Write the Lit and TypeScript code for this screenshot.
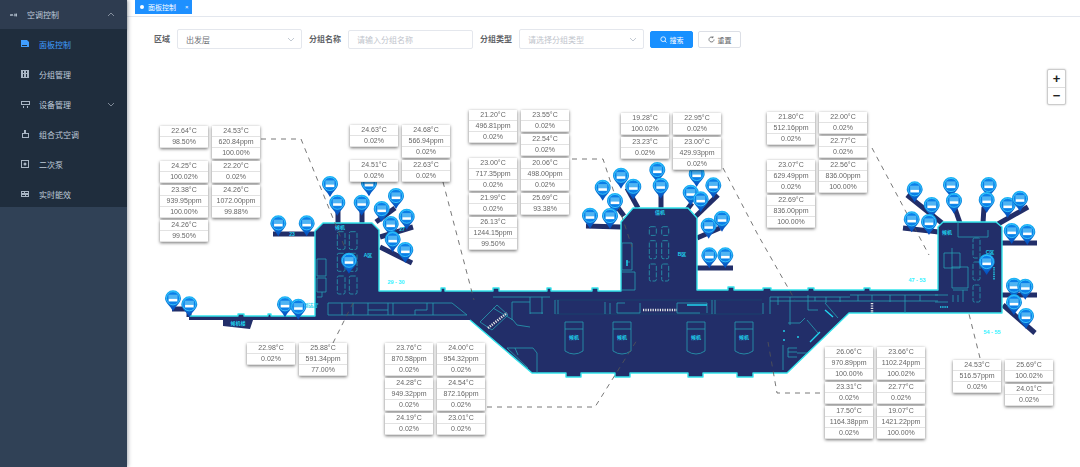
import { LitElement, html, css, svg } from "lit";
import { customElement } from "lit/decorators.js";

// canvas origin in page coordinates, everything on the map is given in page px
const OX = 127;
const OY = 60;

type Cell = string[][];
interface Cluster {
  x: number;
  y: number;
  cells: Cell[];
}

const c = (...v: string[]) => v;

const CLUSTERS: Cluster[] = [
  {
    x: 160,
    y: 126,
    cells: [
      [c("22.64°C", "98.50%")],
      [c("24.53°C", "620.84ppm", "100.00%")],
      [c("24.25°C", "100.02%")],
      [c("22.20°C", "0.02%")],
      [c("23.38°C", "939.95ppm", "100.00%")],
      [c("24.26°C", "1072.00ppm", "99.88%")],
      [c("24.26°C", "99.50%")],
    ],
  },
  {
    x: 350,
    y: 125,
    cells: [
      [c("24.63°C", "0.02%")],
      [c("24.68°C", "566.94ppm", "0.02%")],
      [c("24.51°C", "0.02%")],
      [c("22.63°C", "0.02%")],
    ],
  },
  {
    x: 469,
    y: 110,
    cells: [
      [c("21.20°C", "496.81ppm", "0.02%")],
      [c("23.55°C", "0.02%"), c("22.54°C", "0.02%")],
      [c("23.00°C", "717.35ppm", "0.02%")],
      [c("20.06°C", "498.00ppm", "0.02%")],
      [c("21.99°C", "0.02%")],
      [c("25.69°C", "93.38%")],
      [c("26.13°C", "1244.15ppm", "99.50%")],
    ],
  },
  {
    x: 621,
    y: 113,
    cells: [
      [c("19.28°C", "100.02%")],
      [c("22.95°C", "0.02%")],
      [c("23.23°C", "0.02%")],
      [c("23.00°C", "429.93ppm", "0.02%")],
    ],
  },
  {
    x: 767,
    y: 112,
    cells: [
      [c("21.80°C", "512.16ppm", "0.02%")],
      [c("22.00°C", "0.02%"), c("22.77°C", "0.02%")],
      [c("23.07°C", "629.49ppm", "0.02%")],
      [c("22.56°C", "836.00ppm", "100.00%")],
      [c("22.69°C", "836.00ppm", "100.00%")],
    ],
  },
  {
    x: 247,
    y: 343,
    cells: [[c("22.98°C", "0.02%")], [c("25.88°C", "591.34ppm", "77.00%")]],
  },
  {
    x: 385,
    y: 343,
    cells: [
      [c("23.76°C", "870.58ppm", "0.02%")],
      [c("24.00°C", "954.32ppm", "0.02%")],
      [c("24.28°C", "949.32ppm", "0.02%")],
      [c("24.54°C", "872.16ppm", "0.02%")],
      [c("24.19°C", "0.02%")],
      [c("23.01°C", "0.02%")],
    ],
  },
  {
    x: 825,
    y: 347,
    cells: [
      [c("26.06°C", "970.89ppm", "100.00%")],
      [c("23.66°C", "1102.24ppm", "100.02%")],
      [c("23.31°C", "0.02%")],
      [c("22.77°C", "0.02%")],
      [c("17.50°C", "1164.38ppm", "0.02%")],
      [c("19.07°C", "1421.22ppm", "100.00%")],
    ],
  },
  {
    x: 953,
    y: 360,
    cells: [
      [c("24.53°C", "516.57ppm", "0.02%")],
      [c("25.69°C", "100.02%"), c("24.01°C", "0.02%")],
    ],
  },
];

// circle centres of the pins
const PINS: number[][] = [
  [330, 184], [369, 183.3], [337.3, 202.7], [361.7, 202.7], [396, 196], [381.7, 209],
  [406.7, 216.7], [390.7, 224], [392.7, 239.3], [405.3, 250], [349, 260.7], [278.3, 223.3],
  [306.7, 223.3], [173, 298.3], [189.3, 304.3], [285, 304.3], [298.3, 306.7],
  [621, 175.7], [657.3, 170], [602.7, 187.7], [633.3, 186.7], [660.7, 185.7], [696.7, 174],
  [690.7, 192.7], [713.3, 185.3], [700.7, 199.3], [615, 201], [590, 215.7], [610, 216],
  [708.7, 225.7], [722, 218.7], [709.3, 255.3], [725.3, 255.3],
  [914.7, 189.3], [931.7, 205], [951, 185], [954, 200.7], [988.7, 185], [986.7, 200],
  [1007.7, 205], [1020, 198.7], [911.7, 219.3], [929, 222], [1011.7, 231], [1027.3, 232],
  [986.7, 262], [1014, 285.7], [1025.3, 286.7], [1014, 302.3], [1026, 316],
];

const BRIDGES: string[] = [
  "273,234 316,234", "172,309 189,309 189,317",
  "338,224 338,205", "362,224 362,205", "376,222 395,208", "380,237 413,227", "380,247 412,263",
  "586,226 621,227", "610,197 624,216", "627,188 638,208", "661,190 661,208", "686,211 692,203",
  "695,217 718,195", "697,238 720,228", "697,268 733,268",
  "907,195 942,223", "953,203 960,223", "984,207 983,223", "1028,207 998,224", "903,228 939,232",
  "1002,243 1037,243", "1002,295 1037,295", "1003,305 1035,333",
];

const GATES: number[][] = [
  [337.3, 231.7, 7.7, 17.7], [349.3, 231.7, 7.7, 17.7], [337.3, 253.3, 7.7, 18], [349.3, 253.3, 7.7, 18],
  [337.3, 276, 7.7, 18], [349.3, 276, 7.7, 18],
  [649.3, 226.7, 7, 8.7], [661.7, 226.7, 7, 8.7], [649.3, 240.7, 7, 18], [661.7, 240.7, 7, 18],
  [649.3, 264, 7, 17], [661.7, 264, 7, 17],
  [973, 238, 7, 20], [973, 262, 7, 18], [973, 285, 7, 17],
];

const DASHES: string[] = [
  "261,139 301,139 345,248",
  "443,182 474,300",
  "572,159 603,159 632,247",
  "723,168 758,235 795,300",
  "872,148 929,255",
  "333,343 353,303",
  "487,407 595,407 637,340",
  "820,393 777,393 768,342",
  "980,358 968,310",
];

const INNER: string[] = [
  // west concourse rooms
  "M328 303H452L467 315M328 315H467M328 303V315M342 303V315M353 303V315M368 303V315M368 310H388M388 303V315M393 303V315M415 310H427V303M415 310V315M433 303V315",
  // hub A side rooms
  "M317 259H326V276H317ZM317 278H326V292H317ZM322 292V297H317",
  // hub B side rooms
  "M622 243H632V270H622ZM622 272H635V290H622M626 262H630",
  // central row
  "M493 297H550M512 302V320M530 297V314M542 297V314M512 302H530M530 313H543M493 308L513 320L517 325L530 327",
  "M555 300V314M558 300V314M605 302V314M610 303V314M617 303V313H640V303M617 303H625M677 303V313H700M677 303H707V313M712 300V314M715 300V314",
  "M480 322L497 305L508 315L492 330ZM507 348H533L537 353V373M515 348L518 355M507 348L528 368",
  // east concourse
  "M763 303V314M770 297V314M770 297H850M770 301H850M778 297V305M790 297V325M788 323H800L805 318M808 295V310H818M815 297V301M826 297V303M840 297V302",
  "M850 295H938M850 301H938M858 295V301M872 295V301M890 295V302M905 295V313M920 295V301",
  "M825 303L838 318M807 320L818 333M783 345V370M788 348H797M788 348V357H797M788 352H797M797 353H815",
  // hub C rooms
  "M958 222V237H988V230M944 253H960V268H944ZM952 248V268M952 267H968V288H952ZM953 290H968M953 295V302M958 295V302M963 290V302M935 295H948M935 302H948",
];

@customElement("app-root")
export class AppRoot extends LitElement {
  static styles = css`
    :host {
      display: block;
      height: 467px;
      overflow: hidden;
      font-family: "Liberation Sans", "Noto Sans CJK SC", sans-serif;
      background: #fff;
    }
    .app {
      display: flex;
      height: 100%;
    }
    .side {
      width: 127px;
      flex: none;
      background: #304156;
      box-shadow: 1px 0 4px rgba(0, 21, 41, 0.35);
      z-index: 2;
      color: #bfcbd9;
      font-size: 8px;
    }
    .head {
      height: 29px;
      display: flex;
      align-items: center;
      padding: 0 12px 0 10px;
      background: #2e3c50;
      box-shadow: 0 1px 2px rgba(0, 0, 0, 0.2);
      gap: 9px;
    }
    .head span,
    .item span {
      flex: 1;
    }
    .sub {
      background: #1f2d3d;
      height: 178px;
    }
    .item {
      height: 30px;
      display: flex;
      align-items: center;
      padding: 0 12px 0 21px;
      gap: 9px;
    }
    .item.on {
      color: #409eff;
    }
    .main {
      flex: 1;
      display: flex;
      flex-direction: column;
      min-width: 0;
    }
    .tabs {
      height: 16px;
      flex: none;
      border-bottom: 1px solid #e3e7ee;
      padding-left: 8px;
      display: flex;
    }
    .tab {
      width: 57px;
      height: 14px;
      box-sizing: border-box;
      background: #1e90ff;
      color: #fff;
      font-size: 7px;
      display: flex;
      align-items: center;
      padding-left: 5px;
      gap: 4px;
    }
    .tab i {
      width: 4px;
      height: 4px;
      border-radius: 50%;
      background: #fff;
    }
    .tab b {
      font-weight: 400;
      margin-left: 5px;
      font-size: 6px;
    }
    .form {
      flex: none;
      height: 43px;
      box-sizing: border-box;
      padding: 12px 0 0 27px;
      display: flex;
      align-items: flex-start;
      font-size: 8px;
      color: #606266;
    }
    .form label {
      font-weight: 700;
      height: 20px;
      line-height: 21px;
      margin-right: 7px;
      white-space: nowrap;
    }
    .ctl {
      width: 125px;
      height: 20px;
      box-sizing: border-box;
      border: 1px solid #e4e7ed;
      border-radius: 2px;
      padding: 0 6px 0 8px;
      margin-right: 7px;
      display: flex;
      align-items: center;
      justify-content: space-between;
      color: #6d7076;
      background: #fff;
    }
    .ctl.ph {
      color: #c0c4cc;
    }
    .ctl.inp {
      height: 19px;
      margin-top: 1px;
    }
    .btn {
      width: 43px;
      height: 17px;
      margin: 2px 5px 0 -1px;
      box-sizing: border-box;
      border: 1px solid #1890ff;
      border-radius: 2px;
      background: #1890ff;
      color: #fff;
      font-size: 7px;
      display: flex;
      align-items: center;
      justify-content: center;
      gap: 3px;
    }
    .btn.plain {
      background: #fff;
      border-color: #dcdfe6;
      color: #606266;
      margin-left: 0;
    }
    .canvas {
      flex: 1;
      position: relative;
      overflow: hidden;
    }
    .map {
      position: absolute;
      left: 0;
      top: 0;
      width: 953px;
      height: 407px;
    }
    .cluster {
      position: absolute;
      display: grid;
      grid-template-columns: 48px 48px;
      column-gap: 4px;
      row-gap: 2px;
      align-items: start;
      will-change: opacity;
    }
    .stack {
      display: flex;
      flex-direction: column;
      gap: 2px;
    }
    .card {
      background: #dfdfdf;
      box-shadow: 0 1px 3px rgba(0, 0, 0, 0.55);
    }
    .card div {
      height: 11px;
      box-sizing: border-box;
      line-height: 10px;
      background: #fff;
      border-bottom: 1px solid #e2e2e2;
      text-align: center;
      font-size: 7px;
      color: #666;
      white-space: nowrap;
    }
    .zoom {
      position: absolute;
      top: 9px;
      right: 14px;
      width: 19px;
      height: 36px;
      box-sizing: border-box;
      background: #fff;
      border: 1px solid #ccc;
      border-radius: 2px;
      box-shadow: 0 0 2px rgba(0, 0, 0, 0.25);
      display: flex;
      flex-direction: column;
    }
    .zoom div {
      flex: 1;
      display: flex;
      align-items: center;
      justify-content: center;
      font: 700 13px "Liberation Sans", sans-serif;
      color: #222;
    }
    .zoom div + div {
      border-top: 1px solid #ddd;
    }
  `;

  chevron(up = false) {
    return html`<svg width="8" height="5" viewBox="0 0 8 5" fill="none" stroke="#a8b2bf" stroke-width=".7">
      <path d=${up ? "M1 4L4 1l3 3" : "M1 1l3 3 3-3"} />
    </svg>`;
  }

  icon(d: string, color = "#a9b6c5") {
    return html`<svg width="9" height="9" viewBox="0 0 9 9" style="flex:none">
      <path d=${d} fill=${color} fill-rule="evenodd" />
    </svg>`;
  }

  renderSide() {
    return html`<aside class="side">
      <div class="head">
        <svg width="8" height="8" viewBox="0 0 8 8" style="flex:none" fill="none" stroke="#bfcbd9" stroke-width=".8">
          <path d="M0 3l1 2 1-2 1 2M4 4h3M5 2.5v3M6.5 2.5v3" />
        </svg>
        <span>空调控制</span>${this.chevron(true)}
      </div>
      <div class="sub">
        <div class="item on">
          ${this.icon("M0 0h6l2 2v5H0zM1 5v1h5V5z", "#409eff")}<span>面板控制</span>
        </div>
        <div class="item">
          ${this.icon("M0 0h8v8H0zM2 1v2h1V1zM5 1v2h1V1zM2 4v3h1V4zM5 4v3h1V4z")}<span>分组管理</span>
        </div>
        <div class="item">
          ${this.icon("M0 1h9v4H0zM1 2v2h7V2zM2 6h1v2H2zM6 6h1v2H6z")}<span>设备管理</span>${this.chevron()}
        </div>
        <div class="item">
          ${this.icon("M3 0h2v3h3v5H1V3h2zM2 4v3h5V4z")}<span>组合式空调</span>
        </div>
        <div class="item">
          ${this.icon("M0 0h8v8H0zM1 1v6h6V1zM4 2.5a1.5 1.5 0 1 1 0 3 1.5 1.5 0 0 1 0-3z")}<span>二次泵</span>
        </div>
        <div class="item">
          ${this.icon("M0 1h8v6H0zM1 2v1h2V2zM4 2v1h3V2zM1 5v1h3V5zM5 5v1h2V5z")}<span>实时能效</span>
        </div>
      </div>
    </aside>`;
  }

  renderForm() {
    return html`<div class="form">
      <label>区域</label>
      <div class="ctl"><span>出发层</span>${this.chevron()}</div>
      <label>分组名称</label>
      <div class="ctl ph inp"><span>请输入分组名称</span></div>
      <label>分组类型</label>
      <div class="ctl ph"><span>请选择分组类型</span>${this.chevron()}</div>
      <div class="btn">
        <svg width="7" height="7" viewBox="0 0 7 7" fill="none" stroke="#fff" stroke-width=".8">
          <circle cx="3.2" cy="3.2" r="2.4" /><path d="M5 5l1.5 1.5" />
        </svg>
        搜索
      </div>
      <div class="btn plain">
        <svg width="7" height="7" viewBox="0 0 7 7" fill="none" stroke="#606266" stroke-width=".8">
          <path d="M6 3.5A2.5 2.5 0 1 1 5 1.5M5 .3v1.4H3.6" />
        </svg>
        重置
      </div>
    </div>`;
  }

  renderMap() {
    // open outline: the west strip has no cyan edge on its underside
    const edge =
      "M189 316H238V314H244V316H268V314H271V316H315V231L323 223H372L379 230V291H441V288H445V291H493V288H499V291H547V288H551V291H592V288H598V291H621V222L633 208H688L697 218V290H728V287H734V290H763V288H771V290H808V288H814V290H864V288H870V290H938V227L943 222H996L1002 227V313H849L787 373H753V377H737V373H703V377H688V373H630V377H615V373H581V377H566V373H532L470 320";
    const plan = `${edge}H189Z`;
    return svg`<svg class="map" viewBox="${OX} ${OY} 953 407">
      <defs>
        <linearGradient id="pg" x1="0" y1="0" x2="0" y2="1">
          <stop offset="0" stop-color="#18b4f8" /><stop offset="1" stop-color="#0348bc" />
        </linearGradient>
        <g id="pin">
          <path d="M-8 0A8 8 0 1 1 8 0C8 4.5 3 7 0 13C-3 7 -8 4.5 -8 0Z" fill="url(#pg)" />
          <circle r="6.6" fill="#0b7fe8" stroke="#3ac6fc" stroke-width=".9" />
          <rect x="-4.6" y="-3.6" width="9.2" height="7" fill="#4fb4f3" />
          <rect x="-4.2" y="0.6" width="8.4" height="2.4" fill="#fff" />
        </g>
        <clipPath id="inside"><path d=${plan} /></clipPath>
      </defs>
      <g fill="none" stroke="#222e69" stroke-width="5">
        ${BRIDGES.map((p) => svg`<polyline points=${p} />`)}
      </g>
      <path d="M223 318L253 320L250 329L223 326Z" fill="#222e69" />
      <path d=${plan} fill="#222e69" />
      <path d=${edge} fill="none" stroke="#33e4ec" stroke-width="1.4" stroke-linejoin="round" />
      <g clip-path="url(#inside)">
        <path d="M555 300H762M555 314H762" fill="none" stroke="#17466e" stroke-width=".8" />
        <g fill="none" stroke="#279fb2" stroke-width=".8">
          ${INNER.map((d) => svg`<path d=${d} />`)}
          ${GATES.map(
            ([x, y, w, h]) => svg`<rect x=${x} y=${y} width=${w} height=${h} rx="1.5" stroke-dasharray="5 1.5" />`
          )}
          ${[565, 613, 687, 735].map(
            (x) => svg`<path d="M${x} 322H${x + 18}M${x} 322V351Q${x + 9} 357 ${x + 18} 351V322M${x} 329H${x + 18}" />`
          )}
        </g>
      </g>
      <g fill="none" stroke="#e8e8e8" stroke-width="2.5" stroke-dasharray="1.2 1.2">
        <path d="M643 310H677" />
        <path d="M488 328L507 313" />
        <path d="M872 303V313" />
      </g>
      <g fill="none" stroke="#20d6f0" stroke-width="1.4">
        <path d="M687 305H707M810 342L820 332M825 310L833 317" />
        <path d="M940 307H948M994 267V280" stroke-dasharray="1.4 .8" />
        <path d="M784 330V332M784 339V341M798 336V338M627 260V266" />
      </g>
      <g fill="#1fd2ee" font-size="5" font-weight="700" text-anchor="middle">
        ${[
          ["候机", 340, 229], ["A区", 368, 257], ["23", 292, 236], ["B区", 682, 256],
          ["值机", 660, 214], ["C区", 990, 254], ["候机", 947, 234], ["到达厅", 311, 307],
          ["候机楼", 238, 325], ["27", 402, 231], ["候机", 574, 339], ["候机", 622, 339],
          ["候机", 696, 339], ["候机", 744, 339],
        ].map(([t, x, y]) => svg`<text x=${x} y=${y}>${t}</text>`)}
      </g>
      <g fill="#2ff2ff" font-size="5.5" font-weight="700" text-anchor="middle">
        <text x="396" y="284">29 - 30</text>
        <text x="917" y="282">47 - 53</text>
        <text x="992" y="334">54 - 55</text>
      </g>
      <g fill="none" stroke="#555" stroke-width=".8" stroke-dasharray="5 5">
        ${DASHES.map((p) => svg`<polyline points=${p} />`)}
      </g>
      ${PINS.map(([x, y]) => svg`<use href="#pin" x=${x} y=${y} />`)}
    </svg>`;
  }

  render() {
    return html`<div class="app">
      ${this.renderSide()}
      <main class="main">
        <div class="tabs">
          <div class="tab"><i></i>面板控制<b>×</b></div>
        </div>
        ${this.renderForm()}
        <div class="canvas">
          ${this.renderMap()}
          ${CLUSTERS.map(
            (g) => html`<div class="cluster" style="left:${g.x - OX}px;top:${g.y - OY}px">
              ${g.cells.map(
                (stack) => html`<div class="stack">
                  ${stack.map(
                    (rows) => html`<div class="card">${rows.map((r) => html`<div>${r}</div>`)}</div>`
                  )}
                </div>`
              )}
            </div>`
          )}
          <div class="zoom"><div>+</div><div>−</div></div>
        </div>
      </main>
    </div>`;
  }
}
